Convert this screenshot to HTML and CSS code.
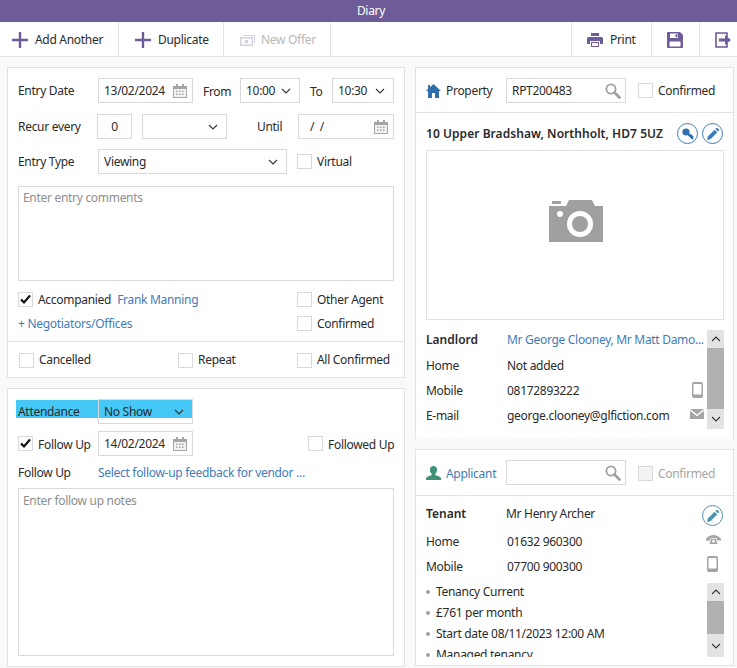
FILE: index.html
```html
<!DOCTYPE html>
<html lang="en">
<head>
<meta charset="utf-8">
<title>Diary</title>
<link rel="stylesheet" href="styles.css">
</head>
<body>
<svg class="defs" width="0" height="0" aria-hidden="true">
  <defs>
    <symbol id="chev" viewBox="0 0 10 6"><path d="M1 1l4 4 4-4" fill="none" stroke="#333" stroke-width="1.100"/></symbol>
    <symbol id="cal" viewBox="0 0 14 14"><path fill="#a5a5a5" d="M0 2h3V0h2v2h4V0h2v2h3v12H0z"/><path fill="#f2f2f2" d="M1 5h12v8H1z"/><path fill="#a5a5a5" d="M3 6.500h1.500V8H3zM6 6.500h1.500V8H6zM9 6.500h1.500V8H9zM3 9.500h1.500V11H3zM6 9.500h1.500V11H6zM9 9.500h1.500V11H9z"/></symbol>
    <symbol id="search" viewBox="0 0 16 16"><circle cx="6" cy="6" r="4.600" fill="none" stroke="#a0a0a0" stroke-width="1.800"/><path d="M9.500 9.500l5 5" stroke="#a0a0a0" stroke-width="2.800" stroke-linecap="round"/></symbol>
    <symbol id="tick" viewBox="0 0 15 15"><path d="M3 7.500l3 3 6-7" fill="none" stroke="#111" stroke-width="2.200"/></symbol>
    <symbol id="mobile" viewBox="0 0 11 16"><path fill="#a3a3a3" d="M2 0h7a2 2 0 0 1 2 2v12a2 2 0 0 1-2 2H2a2 2 0 0 1-2-2V2a2 2 0 0 1 2-2z"/><path fill="#fff" d="M1.500 2h8v10.500h-8z"/></symbol>
    <symbol id="pencil" viewBox="0 0 12 12"><path d="M0 12l.8-3.400L7.600 1.800l2.600 2.600L3.400 11.200zM8.400 1l1-1a1 1 0 0 1 1 0l1.600 1.600a1 1 0 0 1 0 1l-1 1z"/></symbol>
  </defs>
</svg>

<header class="titlebar">Diary</header>

<nav class="toolbar">
  <button class="tool tool-add"><svg class="ic-plus" viewBox="0 0 16 16"><path d="M0 8h16M8 0v16" stroke="#6e5c98" stroke-width="2.400"/></svg>Add Another</button>
  <button class="tool tool-dup"><svg class="ic-plus" viewBox="0 0 16 16"><path d="M0 8h16M8 0v16" stroke="#6e5c98" stroke-width="2.400"/></svg>Duplicate</button>
  <button class="tool tool-offer"><svg class="ic-offer" viewBox="0 0 15 11"><path fill="#d5d1e2" d="M0 2h13v9H0z"/><path fill="#fff" d="M1.500 3.500h10v6h-10z"/><circle cx="6.500" cy="6.500" r="2" fill="#d5d1e2"/><path fill="#d5d1e2" d="M3 0h12v8h-1V1H3z"/></svg>New Offer</button>
  <span class="tool-fill"></span>
  <button class="tool tool-print"><svg class="ic-print" viewBox="0 0 16 14"><path fill="#6e5c98" d="M4 0h8v3H4zM1.500 4h13A1.500 1.500 0 0 1 16 5.500V11h-3V8H3v3H0V5.500A1.500 1.500 0 0 1 1.500 4z"/><path fill="#6e5c98" d="M4 9h8v5H4z"/><path fill="#fff" d="M5 10h6v3H5z"/></svg>Print</button>
  <button class="tool tool-save" aria-label="Save"><svg class="ic-save" viewBox="0 0 16 16"><path fill="#6e5c98" d="M1 0h12l3 3v12a1 1 0 0 1-1 1H1a1 1 0 0 1-1-1V1a1 1 0 0 1 1-1z"/><path fill="#fff" d="M3 1.500h8V6H3zM2.500 9.500h11V14.500h-11z"/><path fill="#6e5c98" d="M8.500 2.200h2v3h-2z"/></svg></button>
  <button class="tool tool-exit" aria-label="Exit"><svg class="ic-exit" viewBox="0 0 16 16"><path fill="none" stroke="#6e5c98" stroke-width="1.600" d="M12 5V1H1v14h11v-4"/><path fill="#6e5c98" d="M4 6.500h6V3l6 5-6 5V9.500H4z"/></svg></button>
</nav>

<main class="content">
  <div class="col col-left">
    <section class="panel panel-entry">
      <div class="sec-form">
        <div class="row r1">
          <span class="lbl w80">Entry Date</span>
          <div class="field w95"><span>13/02/2024</span><svg class="ic-cal"><use href="#cal"/></svg></div>
          <span class="lbl w37 ml10 low">From</span>
          <div class="field w60"><span>10:00</span><svg class="ic-chev"><use href="#chev"/></svg></div>
          <span class="lbl w22 ml10 low">To</span>
          <div class="field w62"><span>10:30</span><svg class="ic-chev"><use href="#chev"/></svg></div>
        </div>
        <div class="row r2">
          <span class="lbl w79">Recur every</span>
          <div class="field w35 center"><span>0</span></div>
          <div class="field w85 ml10"><span></span><svg class="ic-chev"><use href="#chev"/></svg></div>
          <span class="lbl w41 ml30">Until</span>
          <div class="field w96"><span class="slashes">/ &nbsp;/</span><svg class="ic-cal"><use href="#cal"/></svg></div>
        </div>
        <div class="row r3">
          <span class="lbl w80">Entry Type</span>
          <div class="field w189"><span>Viewing</span><svg class="ic-chev"><use href="#chev"/></svg></div>
          <label class="chk ml10"><i class="box"></i>Virtual</label>
        </div>
        <div class="area area-entry">Enter entry comments</div>
        <div class="line l1">
          <div class="w279 flexrow"><label class="chk"><i class="box"><svg class="ic-tick"><use href="#tick"/></svg></i>Accompanied</label><a class="link ml6">Frank Manning</a></div>
          <label class="chk"><i class="box"></i>Other Agent</label>
        </div>
        <div class="line l2">
          <div class="w279"><a class="link">+ Negotiators/Offices</a></div>
          <label class="chk"><i class="box"></i>Confirmed</label>
        </div>
      </div>
      <div class="sec-foot">
        <label class="chk w159"><i class="box"></i>Cancelled</label>
        <label class="chk w119"><i class="box"></i>Repeat</label>
        <label class="chk"><i class="box"></i>All Confirmed</label>
      </div>
    </section>

    <section class="panel panel-follow">
      <div class="row attendance">
        <span class="hl"></span>
        <span class="lbl w80 up">Attendance</span>
        <div class="field w95 clear up"><span>No Show</span><svg class="ic-chev"><use href="#chev"/></svg></div>
      </div>
      <div class="row r-follow">
        <label class="chk w80 drop"><i class="box"><svg class="ic-tick"><use href="#tick"/></svg></i>Follow Up</label>
        <div class="field w95"><span>14/02/2024</span><svg class="ic-cal"><use href="#cal"/></svg></div>
        <label class="chk ml115 drop"><i class="box"></i>Followed Up</label>
      </div>
      <div class="line l-fu">
        <span class="lbl w80">Follow Up</span>
        <a class="link">Select follow-up feedback for vendor ...</a>
      </div>
      <div class="area area-follow">Enter follow up notes</div>
    </section>
  </div>

  <div class="col col-right">
    <section class="panel panel-prop">
      <div class="pane-head">
        <svg class="ic-home" viewBox="0 0 15 14"><path fill="#2f6fad" d="M7.500 0L15 7h-2v7H9V9H6v5H2V7H0l2-1.900V1h2v2.200z"/></svg>
        <span class="lbl w60 nm">Property</span>
        <div class="field w120"><span>RPT200483</span><svg class="ic-search"><use href="#search"/></svg></div>
        <label class="chk ml12"><i class="box"></i>Confirmed</label>
      </div>
      <div class="pane-body">
        <div class="addr">
          <strong class="addr-text">10 Upper Bradshaw, Northholt, HD7 5UZ</strong>
          <span class="circle"><svg class="ic-key" viewBox="0 0 12 12"><circle cx="4" cy="4" r="3.600"/><path d="M5 5l6 6M8 8l1.500-1.500M9.500 9.500L11 8" stroke="#2f6fad" stroke-width="2"/></svg></span>
          <span class="circle ml4 end"><svg class="ic-pen"><use href="#pencil"/></svg></span>
        </div>
        <div class="photo">
          <svg class="ic-camera" viewBox="0 0 55 43"><path fill="#a0a0a0" d="M0 7h17l3-6h23l3 6h8v36H0z"/><path fill="#a0a0a0" d="M3 2h9v3H3z"/><circle cx="11" cy="15" r="3" fill="#fff"/><circle cx="31" cy="25" r="13" fill="#fff"/><circle cx="31" cy="25" r="8" fill="#a0a0a0"/></svg>
        </div>
        <div class="details">
          <div class="detail-rows">
            <div class="d-row first"><strong class="d-k">Landlord</strong><a class="link d-v">Mr George Clooney, Mr Matt Damo...</a></div>
            <div class="d-row"><span class="d-k">Home</span><span class="d-v">Not added</span></div>
            <div class="d-row"><span class="d-k">Mobile</span><span class="d-v">08172893222</span><svg class="ic-mobile"><use href="#mobile"/></svg></div>
            <div class="d-row"><span class="d-k">E-mail</span><span class="d-v">george.clooney@glfiction.com</span><svg class="ic-mail" viewBox="0 0 14 10"><path fill="#a5a5a5" d="M0 0h14L7 5.500zM0 1.800L7 7.200l7-5.400V10H0z"/></svg></div>
          </div>
          <div class="scroll s-land">
            <span class="sbtn"><svg class="ic-chev"><use href="#chev"/></svg></span>
            <span class="thumb"></span>
            <span class="sbtn last"><svg class="ic-chev"><use href="#chev"/></svg></span>
          </div>
        </div>
      </div>
    </section>

    <section class="panel panel-app">
      <div class="pane-head h-app">
        <svg class="ic-user" viewBox="0 0 15 14"><path fill="#3f9178" d="M7.500 0a3.600 3.600 0 0 1 3.600 3.800c0 1.800-.9 3.400-1.900 4.200v1l4 1.500c1.200.5 1.800 1.300 1.800 2.300V14H0v-1.200c0-1 .6-1.800 1.800-2.300l4-1.500V8C4.800 7.200 3.900 5.600 3.900 3.800A3.600 3.600 0 0 1 7.500 0z"/></svg>
        <a class="link w60 nm low">Applicant</a>
        <div class="field w120"><span></span><svg class="ic-search"><use href="#search"/></svg></div>
        <label class="chk ml12 off low"><i class="box"></i>Confirmed</label>
      </div>
      <div class="pane-body b-app">
        <div class="d-row t"><strong class="d-k k79">Tenant</strong><span class="d-v">Mr Henry Archer</span><span class="circle teal"><svg class="ic-pen"><use href="#pencil"/></svg></span></div>
        <div class="d-row t2"><span class="d-k">Home</span><span class="d-v">01632 960300</span><svg class="ic-phone" viewBox="0 0 15 9"><path fill="#a5a5a5" d="M0 4C2 1 5 0 7.500 0S13 1 15 4v1.500h-4V3.500C9.500 3 5.500 3 4 3.500v2H0z"/><path fill="#a5a5a5" d="M3.500 9L5 4h5l1.500 5z"/><circle cx="7.500" cy="6.300" r="1.400" fill="#fff"/></svg></div>
        <div class="d-row t2"><span class="d-k">Mobile</span><span class="d-v">07700 900300</span><svg class="ic-mobile m2"><use href="#mobile"/></svg></div>
        <div class="tenancy">
          <ul class="facts">
            <li>Tenancy Current</li>
            <li>£761 per month</li>
            <li>Start date 08/11/2023 12:00 AM</li>
            <li>Managed tenancy</li>
          </ul>
          <div class="scroll s-app">
            <span class="sbtn"><svg class="ic-chev"><use href="#chev"/></svg></span>
            <span class="thumb"></span>
            <span class="sbtn last"><svg class="ic-chev"><use href="#chev"/></svg></span>
          </div>
        </div>
      </div>
    </section>
  </div>
</main>
</body>
</html>
```

FILE: styles.css
```css
* { box-sizing: border-box; }
html, body { margin: 0; padding: 0; }
body {
  width: 737px; height: 668px; overflow: hidden;
  background: #f9f9f9; color: #2a2a2a;
  font: 12px/16px "Noto Sans", "Open Sans", sans-serif;
  letter-spacing: -0.3px;
}
.defs { position: absolute; }
.titlebar { height: 22px; padding: 1px 0 0 5px; background: #6e5c98; color: #fff; text-align: center; line-height: 20px; }

.toolbar { display: flex; height: 35px; background: #fff; border-bottom: 1px solid #e2e2e2; }
.tool { display: flex; align-items: center; padding: 2px 0 0; height: 34px; background: none; border: 0; border-right: 1px solid #e4e4e4; font: inherit; letter-spacing: inherit; color: #2a2a2a; }
.tool-add { width: 119px; padding-left: 12px; }
.tool-dup { width: 105px; padding-left: 16px; }
.tool-offer { width: 107px; padding-left: 16px; color: #b9b9b9; }
.tool-fill { width: 241px; border-right: 1px solid #e4e4e4; height: 34px; }
.tool-print { width: 80px; padding-left: 15px; }
.tool-save { width: 48px; padding-left: 15px; padding-top: 1px; }
.tool-exit { width: 37px; padding-left: 15px; padding-top: 1px; border-right: 0; }
.ic-plus { width: 16px; height: 16px; margin-right: 7px; }
.ic-offer { width: 15px; height: 11px; margin-right: 6px; }
.ic-print { width: 16px; height: 14px; margin-right: 7px; }
.ic-save, .ic-exit { width: 16px; height: 16px; }

.content { display: flex; gap: 10px; padding: 10px 0 0 7px; }
.col { display: flex; flex-direction: column; gap: 10px; }
.col-left { width: 398px; }
.col-right { width: 319px; gap: 10px; }
.panel { background: #fff; border: 1px solid #e2e2e2; }

.sec-form { padding: 10px 10px 10px; border-bottom: 1px solid #e2e2e2; }
.sec-foot { display: flex; align-items: center; padding: 10px 10px 9px 11px; }
.row { display: flex; align-items: center; height: 25px; }
.r2 { margin-top: 11px; }
.r3 { margin-top: 10px; }
.lbl { flex: none; }
.low { padding-top: 2px; }
.field {
  flex: none; display: flex; align-items: center; justify-content: space-between;
  height: 25px; padding: 0 5px; background: #fff; border: 1px solid #d9d9d9;
}
.field.center { justify-content: center; }
.field.clear { background: transparent; }
.slashes { padding-left: 6px; }
.ic-cal { width: 14px; height: 14px; flex: none; margin-right: 0; }
.ic-chev { width: 10px; height: 6px; flex: none; margin-right: 3px; }
.ic-search { width: 16px; height: 16px; flex: none; margin-right: -1px; }
.w22 { width: 22px; } .w35 { width: 35px; } .w37 { width: 37px; } .w41 { width: 41px; }
.w60 { width: 60px; } .w62 { width: 62px; } .w79 { width: 79px; } .w80 { width: 80px; }
.w85 { width: 85px; } .w95 { width: 95px; } .w96 { width: 96px; } .w119 { width: 119px; }
.w120 { width: 120px; } .w159 { width: 159px; } .w189 { width: 189px; } .w279 { width: 279px; }
.ml4 { margin-left: 4px; } .ml6 { margin-left: 6px; } .ml10 { margin-left: 10px; }
.ml12 { margin-left: 12px; } .ml30 { margin-left: 30px; } .ml115 { margin-left: 115px; }
.flexrow { display: flex; align-items: center; }

.chk { display: flex; align-items: center; flex: none; }
.box { display: block; width: 15px; height: 15px; margin-right: 5px; border: 1px solid #d9d9d9; background: #fff; flex: none; position: relative; }
.ic-tick { position: absolute; left: -1px; top: -1px; width: 15px; height: 15px; }
.chk.off { color: #a5a5a5; }
.chk.off .box { background: #f3f3f3; }
.chk.drop { padding-top: 2px; }
.chk.drop .box { margin-top: -2px; }
.link { color: #3f7cb8; }

.area { border: 1px solid #d9d9d9; padding: 3px 4px; color: #8e8e8e; }
.area-entry { height: 95px; margin-top: 12px; }
.area-follow { height: 168px; margin-top: 8px; padding-top: 4px; }
.line { display: flex; align-items: center; height: 15px; }
.l1 { margin-top: 11px; }
.l2 { margin-top: 9px; }

.panel-follow { padding: 10px 10px 10px; height: 279px; }
.attendance { position: relative; }
.hl { position: absolute; left: -2px; top: 1px; width: 176px; height: 18px; background: #45c8f5; }
.up { position: relative; }
.r-follow { margin-top: 7px; }
.l-fu { margin-top: 8px; height: 16px; padding-top: 1px; }

.pane-head { display: flex; align-items: center; padding: 10px 10px 9px; border-bottom: 1px solid #e2e2e2; }
.h-app { padding-bottom: 10px; }
.ic-home, .ic-user { width: 15px; height: 14px; margin-right: 5px; flex: none; }
.nm { flex: none; }
.pane-body { padding: 10px 9px 0 10px; }
.panel-prop { height: 372px; border-bottom: 0; }
.panel-app { height: 217px; }
.addr { display: flex; align-items: center; height: 21px; }
.addr-text { flex: 1; font-weight: 600; letter-spacing: 0.05px; }
.circle { display: flex; align-items: center; justify-content: center; width: 21px; height: 21px; border: 1px solid #3f7cb8; border-radius: 50%; flex: none; fill: #3f7cb8; }
.circle.end { margin-right: 1px; }
.circle.teal { border-color: #4a93ad; fill: #4a93ad; margin-left: auto; margin-top: 1px; margin-right: 1px; align-self: flex-start; }
.ic-pen { width: 12px; height: 12px; }
.ic-key { width: 12px; height: 12px; fill: #2f6fad; }
.photo { display: flex; align-items: center; justify-content: center; height: 170px; margin-top: 6px; border: 1px solid #e2e2e2; }
.ic-camera { width: 55px; height: 43px; margin: 0 0 29px 3px; }

.details { display: flex; margin-top: 10px; }
.detail-rows { width: 281px; flex: none; }
.d-row { display: flex; align-items: flex-start; height: 25px; line-height: 20px; }
.d-row.first { height: 26px; }
.d-k { width: 81px; flex: none; }
strong.d-k { font-weight: 600; letter-spacing: 0; }
.d-v { flex: none; }
.ic-mobile { width: 11px; height: 16px; margin-left: auto; margin-right: 4px; margin-top: 1px; }
.ic-mail { width: 14px; height: 10px; margin-left: auto; margin-right: 3px; margin-top: 3px; }

.scroll { display: flex; flex-direction: column; width: 17px; margin-left: 0; background: #e3e3e3; }
.s-land { height: 99px; }
.s-land .thumb { height: 61px; }
.s-app { height: 74px; }
.s-app .thumb { height: 33px; }
.sbtn { display: flex; align-items: center; justify-content: center; height: 18px; flex: none; }
.sbtn .ic-chev { margin: 0; transform: rotate(180deg); }
.sbtn.last { flex: 1; }
.sbtn.last .ic-chev { transform: none; }
.thumb { display: block; background: #b0b0b0; flex: none; }

.b-app { padding-top: 8px; }
.d-row.t { height: 28px; }
.k79 { width: 80px; }
.ic-phone { width: 15px; height: 9px; margin-left: auto; margin-right: 3px; margin-top: 3px; }
.ic-mobile.m2 { margin-right: 6px; margin-top: -1px; }
.tenancy { display: flex; margin-top: 1px; }
.facts { list-style: none; margin: 0; padding: 0; width: 281px; height: 74px; overflow: hidden; flex: none; }
.facts li { position: relative; line-height: 18px; margin-bottom: 3px; padding-left: 10px; }
.facts li::before { content: ""; position: absolute; left: 0; top: 7px; width: 4px; height: 4px; border-radius: 50%; background: #a0a0a0; }
```
